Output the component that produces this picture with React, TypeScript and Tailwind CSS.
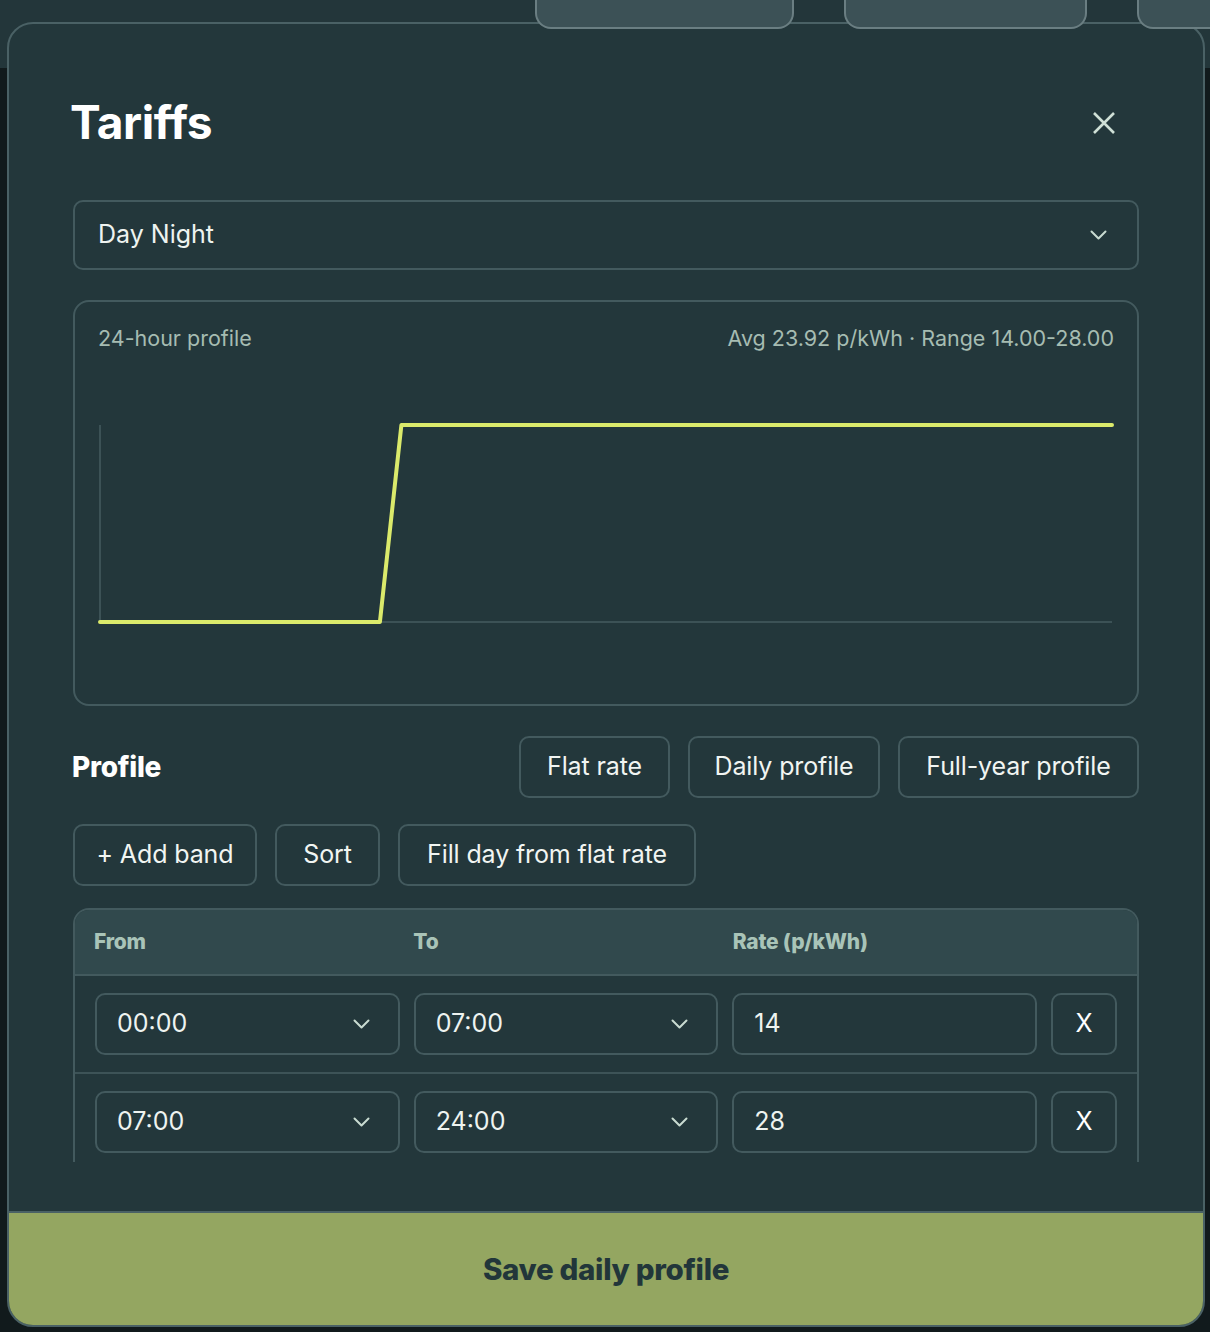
import React from "react";

const RATES = Array.from({ length: 48 }, (_, i) => (i < 14 ? 14 : 28));

function Chevron({ className = "" }: { className?: string }) {
  return (
    <svg width="17" height="10" viewBox="0 0 17 10" className={className}>
      <polyline points="1.5,1.5 8.5,8.5 15.5,1.5" fill="none" stroke="#c9dbd1" strokeWidth="2" strokeLinecap="round" strokeLinejoin="round" />
    </svg>
  );
}

function Chart() {
  const left = 25;
  const right = 1037;
  const top = 74;
  const bottom = 271;
  const step = (right - left) / 47;
  const pts = RATES.map((r, i) => `${(left + i * step).toFixed(1)},${r === 28 ? top : bottom}`).join(" ");
  return (
    <svg width="1062" height="353" className="block">
      <line x1={left} y1={top} x2={left} y2={bottom} stroke="#465c60" strokeWidth="1.5" />
      <line x1={left} y1={bottom} x2={right} y2={bottom} stroke="#465c60" strokeWidth="1.5" />
      <polyline points={pts} fill="none" stroke="#dbea6b" strokeWidth="4" strokeLinejoin="round" strokeLinecap="round" />
    </svg>
  );
}

function OutlineButton({ label, w }: { label: string; w: string }) {
  return (
    <button className={`${w} h-[62px] rounded-[10px] border-2 border-[#435a5e] text-[25px] tracking-[-0.005em] text-[#f1f5f2] flex items-center justify-center`}>
      {label}
    </button>
  );
}

function TimeSelect({ value }: { value: string }) {
  return (
    <div className="h-[62px] rounded-[10px] border-2 border-[#435a5e] flex items-center justify-between pl-[20px] pr-[28px]">
      <span className="text-[25px] text-[#eef3f0]">{value}</span>
      <Chevron />
    </div>
  );
}

function BandRow({ from, to, rate, last }: { from: string; to: string; rate: string; last?: boolean }) {
  return (
    <div className={`grid grid-cols-[1fr_1fr_1fr_66px] gap-[14px] px-[20px] pt-[17px] pb-[17px] ${last ? "" : "border-b-2 border-[#3d5357]"}`}>
      <TimeSelect value={from} />
      <TimeSelect value={to} />
      <div className="h-[62px] rounded-[10px] border-2 border-[#435a5e] flex items-center pl-[20px]">
        <span className="text-[25px] text-[#eef3f0]">{rate}</span>
      </div>
      <button className="h-[62px] rounded-[10px] border-2 border-[#435a5e] flex items-center justify-center text-[25px] text-white">
        X
      </button>
    </div>
  );
}

export default function App() {
  return (
    <div className="relative w-[1210px] h-[1332px] bg-[#111a1c] overflow-hidden font-['Inter',sans-serif]">
      <div className="h-[68px] bg-[#23363a]" />

      {/* dialog */}
      <div className="absolute left-[7px] top-[22px] w-[1198px] h-[1305px] rounded-[26px] border-2 border-[#4a6165] bg-[#23373b] flex flex-col overflow-hidden">
        <div className="h-[1138px] overflow-hidden px-[64px] pt-[75px]">
          <div className="flex items-center justify-between h-[46px]">
            <h1 className="text-[46px] leading-[46px] font-bold text-white tracking-[-0.01em] -ml-[3px]">Tariffs</h1>
            <svg width="24" height="24" viewBox="0 0 24 24" className="mr-[23px] mt-[2px]">
              <path d="M2 2 22 22M22 2 2 22" stroke="#cfe0d6" strokeWidth="2.6" strokeLinecap="butt" />
            </svg>
          </div>

          <div className="mt-[55px] h-[70px] rounded-[10px] border-2 border-[#435a5e] flex items-center justify-between pl-[23px] pr-[30px]">
            <span className="text-[25px] text-[#eef3f0]">Day Night</span>
            <Chevron />
          </div>

          <div className="mt-[30px] h-[406px] rounded-[16px] border-2 border-[#435a5e] flex flex-col">
            <div className="flex justify-between px-[23px] pt-[23px] h-[49px] text-[21.5px] leading-[26px] text-[#a6bcb2]">
              <span>24-hour profile</span>
              <span>Avg 23.92 p/kWh · Range 14.00-28.00</span>
            </div>
            <Chart />
          </div>

          <div className="mt-[30px] flex items-center justify-between">
            <span className="text-[28px] font-extrabold text-white -ml-[1px] tracking-[-0.01em]">Profile</span>
            <div className="flex gap-[18px]">
              <OutlineButton label="Flat rate" w="w-[151px]" />
              <OutlineButton label="Daily profile" w="w-[192px]" />
              <OutlineButton label="Full-year profile" w="w-[241px]" />
            </div>
          </div>

          <div className="mt-[26px] flex gap-[18px]">
            <OutlineButton label="+ Add band" w="w-[184px]" />
            <OutlineButton label="Sort" w="w-[105px]" />
            <OutlineButton label="Fill day from flat rate" w="w-[298px]" />
          </div>

          <div className="mt-[22px] rounded-t-[16px] border-2 border-b-0 border-[#435a5e] overflow-hidden">
            <div className="h-[66px] bg-[#31494d] border-b-2 border-[#435a5e] grid grid-cols-[1fr_1fr_1fr_66px] gap-[14px] px-[19px] items-center text-[21px] font-extrabold tracking-[-0.01em] text-[#a9c4b8]">
              <span>From</span>
              <span>To</span>
              <span>Rate (p/kWh)</span>
              <span />
            </div>
            <BandRow from="00:00" to="07:00" rate="14" />
            <BandRow from="07:00" to="24:00" rate="28" last />
          </div>
        </div>

        <div className="h-[49px]" />

        <button className="h-[114px] border-t-2 border-[#4a6165] bg-[#94a661] flex items-center justify-center">
          <span className="text-[29.5px] font-extrabold text-[#22363a] tracking-[-0.01em]">Save daily profile</span>
        </button>
      </div>

      {/* tabs of the page behind, drawn over the dialog edge */}
      <div className="absolute left-[535px] top-[-20px] w-[259px] h-[49px] rounded-b-[16px] border-2 border-t-0 border-[#6a7e82] bg-[#3c5156] overflow-hidden" />
      <div className="absolute left-[844px] top-[-20px] w-[243px] h-[49px] rounded-b-[16px] border-2 border-t-0 border-[#6a7e82] bg-[#3c5156]" />
      <div className="absolute left-[1137px] top-[-20px] w-[120px] h-[49px] rounded-b-[16px] border-2 border-t-0 border-[#6a7e82] bg-[#3c5156]" />
    </div>
  );
}
